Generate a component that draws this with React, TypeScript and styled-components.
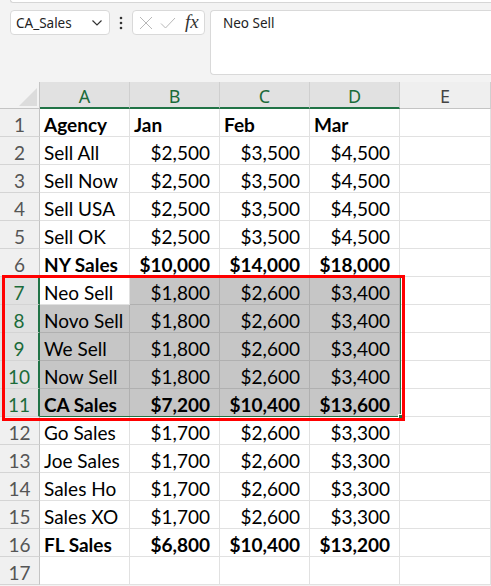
import { createGlobalStyle, styled } from "styled-components";

const GlobalStyle = createGlobalStyle`
  html, body {
    margin: 0;
    padding: 0;
    background: #f3f3f3;
    overflow: hidden;
  }
  * {
    box-sizing: border-box;
  }
`;

type Row = {
  label: string;
  values: string[];
  bold?: boolean;
  header?: boolean;
};

const rows: Row[] = [
  { label: "Agency", values: ["Jan", "Feb", "Mar"], bold: true, header: true },
  { label: "Sell All", values: ["$2,500", "$3,500", "$4,500"] },
  { label: "Sell Now", values: ["$2,500", "$3,500", "$4,500"] },
  { label: "Sell USA", values: ["$2,500", "$3,500", "$4,500"] },
  { label: "Sell OK", values: ["$2,500", "$3,500", "$4,500"] },
  { label: "NY Sales", values: ["$10,000", "$14,000", "$18,000"], bold: true },
  { label: "Neo Sell", values: ["$1,800", "$2,600", "$3,400"] },
  { label: "Novo Sell", values: ["$1,800", "$2,600", "$3,400"] },
  { label: "We Sell", values: ["$1,800", "$2,600", "$3,400"] },
  { label: "Now Sell", values: ["$1,800", "$2,600", "$3,400"] },
  { label: "CA Sales", values: ["$7,200", "$10,400", "$13,600"], bold: true },
  { label: "Go Sales", values: ["$1,700", "$2,600", "$3,300"] },
  { label: "Joe Sales", values: ["$1,700", "$2,600", "$3,300"] },
  { label: "Sales Ho", values: ["$1,700", "$2,600", "$3,300"] },
  { label: "Sales XO", values: ["$1,700", "$2,600", "$3,300"] },
  { label: "FL Sales", values: ["$6,800", "$10,400", "$13,200"], bold: true },
  { label: "", values: ["", "", ""] },
];

const SEL_START = 7;
const SEL_END = 11;
const columns = ["A", "B", "C", "D", "E"];

function App() {
  return (
    <>
      <GlobalStyle />
      <Page>
        <TopStrip />
        <FormulaBar>
          <NameBox>
            <span>CA_Sales</span>
            <svg width="12" height="8" viewBox="0 0 12 8">
              <path d="M1.5 1.5 L6 6 L10.5 1.5" fill="none" stroke="#333" strokeWidth="1.2" />
            </svg>
          </NameBox>
          <Dots>
            <svg width="4" height="14" viewBox="0 0 4 14">
              <circle cx="2" cy="2" r="1.3" fill="#333" />
              <circle cx="2" cy="7" r="1.3" fill="#333" />
              <circle cx="2" cy="12" r="1.3" fill="#333" />
            </svg>
          </Dots>
          <FxBox>
            <svg width="14" height="14" viewBox="0 0 14 14">
              <path d="M1 1 L13 13 M13 1 L1 13" fill="none" stroke="#b8b8b8" strokeWidth="1" />
            </svg>
            <svg width="16" height="14" viewBox="0 0 16 14">
              <path d="M1 7.5 L5.5 12 L15 2" fill="none" stroke="#b8b8b8" strokeWidth="1" />
            </svg>
            <Fx>fx</Fx>
          </FxBox>
          <FormulaInput>Neo Sell</FormulaInput>
        </FormulaBar>
        <Sheet>
          <Corner>
            <svg width="20" height="20" viewBox="0 0 20 20">
              <path d="M20 2 L20 20 L2 20 Z" fill="#dcdcdc" />
            </svg>
          </Corner>
          {columns.map((c, i) => (
            <ColHeader key={c} $selected={i < 4}>
              {c}
            </ColHeader>
          ))}
          {rows.map((row, r) => {
            const n = r + 1;
            const inSel = n >= SEL_START && n <= SEL_END;
            return (
              <RowGroup key={n}>
                <RowHeader $selected={inSel}>{n}</RowHeader>
                <Cell $bold={row.bold} $selected={inSel && n !== SEL_START}>
                  {row.label}
                </Cell>
                {row.values.map((v, i) => (
                  <Cell key={i} $bold={row.bold} $selected={inSel} $right={!row.header}>
                    {v}
                  </Cell>
                ))}
                <Cell />
              </RowGroup>
            );
          })}
          <SelectionBorder />
          <FillHandle />
          <Highlight />
        </Sheet>
      </Page>
    </>
  );
}

const Page = styled.div`
  width: 491px;
  height: 586px;
  overflow: hidden;
  background: #f3f3f3;
  display: flex;
  flex-direction: column;
`;

const TopStrip = styled.div`
  height: 3px;
  margin-left: 10px;
  background: #fff;
  border: 1px solid #d6d6d6;
  border-top: none;
  border-right: none;
  border-radius: 0 0 0 4px;
`;

const FormulaBar = styled.div`
  display: flex;
  align-items: flex-start;
  padding: 7px 0 0 10px;
  height: 79px;
  font-family: "Noto Sans", "Open Sans", sans-serif;
  font-size: 13.5px;
  color: #222;
`;

const NameBox = styled.div`
  width: 100px;
  height: 25px;
  background: #fff;
  border: 1px solid #d9d9d9;
  border-radius: 4px;
  display: flex;
  align-items: center;
  justify-content: space-between;
  padding: 0 6px 0 5px;
`;

const Dots = styled.div`
  width: 22px;
  height: 25px;
  display: flex;
  align-items: center;
  justify-content: center;
`;

const FxBox = styled.div`
  width: 73px;
  height: 25px;
  background: #fff;
  border: 1px solid #d9d9d9;
  border-radius: 4px;
  display: flex;
  align-items: center;
  gap: 7px;
  padding: 0 0 0 6px;
`;

const Fx = styled.span`
  font-family: "Liberation Serif", "DejaVu Serif", serif;
  font-style: italic;
  font-size: 19px;
  line-height: 1;
  color: #333;
  margin-left: 2px;
  margin-top: -2px;
`;

const FormulaInput = styled.div`
  flex: 1;
  height: 65px;
  margin-left: 5px;
  background: #fff;
  border: 1px solid #d9d9d9;
  border-right: none;
  border-radius: 4px 0 0 4px;
  padding: 3px 12px;
`;

const Sheet = styled.div`
  position: relative;
  display: grid;
  grid-template-columns: 40px 90px 90px 90px 90px 1fr;
  grid-auto-rows: 28px;
  grid-template-rows: 27px;
  background: #fff;
  font-family: "Lato", "Liberation Sans", sans-serif;
  font-size: 19px;
  color: #000;
`;

const Corner = styled.div`
  background: #f3f3f3;
  border-bottom: 1px solid #c4c4c4;
  border-right: 1px solid #c4c4c4;
  display: flex;
  align-items: flex-end;
  justify-content: flex-end;
  padding: 0 2px 2px 0;
`;

const ColHeader = styled.div<{ $selected?: boolean }>`
  background: ${(p) => (p.$selected ? "#e1e1e1" : "#efefef")};
  color: ${(p) => (p.$selected ? "#1b6b3a" : "#444")};
  border-right: 1px solid #cfcfcf;
  border-bottom: ${(p) => (p.$selected ? "2px solid #217346" : "1px solid #c4c4c4")};
  font-family: "Noto Sans", "Open Sans", sans-serif;
  font-size: 18px;
  display: flex;
  align-items: center;
  justify-content: center;
  padding-top: 2px;
`;

const RowGroup = styled.div`
  display: contents;
`;

const RowHeader = styled.div<{ $selected?: boolean }>`
  background: ${(p) => (p.$selected ? "#e1e1e1" : "#f0f0f0")};
  color: ${(p) => (p.$selected ? "#1b6b3a" : "#555")};
  border-bottom: 1px solid #d4d4d4;
  border-right: ${(p) => (p.$selected ? "2px solid #217346" : "1px solid #c4c4c4")};
  display: flex;
  align-items: center;
  justify-content: center;
  padding-top: 3px;
`;

const Cell = styled.div<{
  $bold?: boolean;
  $selected?: boolean;
  $right?: boolean;
}>`
  background: ${(p) => (p.$selected ? "#c6c6c6" : "#fff")};
  border-right: 1px solid ${(p) => (p.$selected ? "#b0b0b0" : "#e1e1e1")};
  border-bottom: 1px solid ${(p) => (p.$selected ? "#b0b0b0" : "#e1e1e1")};
  font-weight: ${(p) => (p.$bold ? 700 : 400)};
  display: flex;
  align-items: center;
  justify-content: ${(p) => (p.$right ? "flex-end" : "flex-start")};
  padding: 3px 9px 0 4px;
  white-space: nowrap;
  overflow: hidden;
`;

const SelectionBorder = styled.div`
  position: absolute;
  left: 40px;
  top: 195px;
  width: 361px;
  height: 140px;
  border: 1px solid #217346;
  border-left: none;
  pointer-events: none;
`;

const FillHandle = styled.div`
  position: absolute;
  left: 398px;
  top: 332px;
  width: 6px;
  height: 6px;
  background: #217346;
  border: 1px solid #fff;
`;

const Highlight = styled.div`
  position: absolute;
  left: 2px;
  top: 193px;
  width: 403px;
  height: 146px;
  border: 3px solid #f00;
  pointer-events: none;
`;

export default App;
